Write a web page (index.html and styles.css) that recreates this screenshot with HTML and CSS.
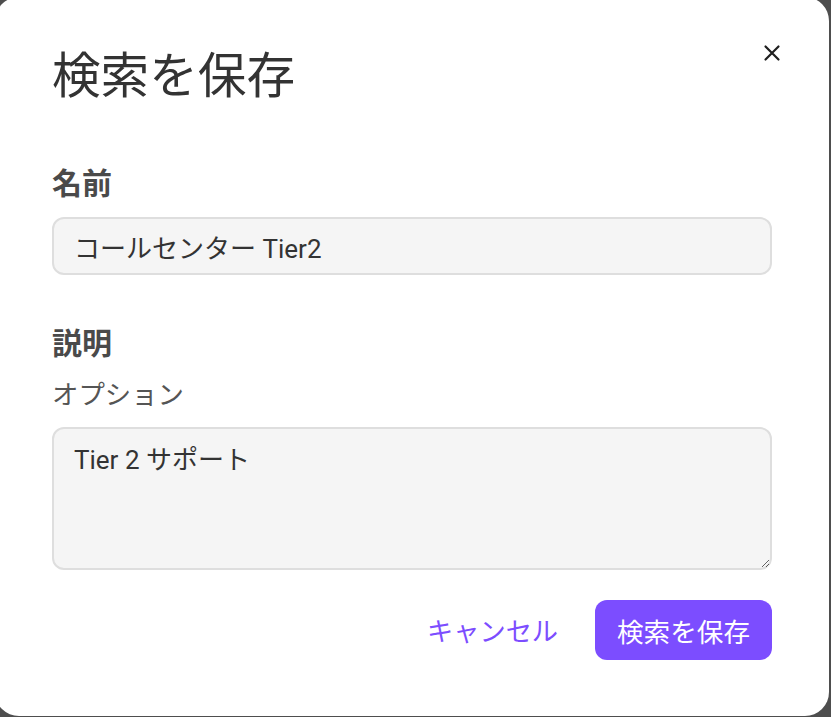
FILE: index.html
```html
<!DOCTYPE html>
<html lang="ja">
<head>
<meta charset="utf-8">
<title>検索を保存</title>
<link rel="stylesheet" href="styles.css">
</head>
<body>
<div class="dialog" role="dialog" aria-labelledby="dlg-title">
  <button class="close" aria-label="閉じる">
    <svg width="18" height="18" viewBox="0 0 18 18"><path d="M2.5 2.5 L15.5 15.5 M15.5 2.5 L2.5 15.5" stroke="#1f1f1f" stroke-width="2.2" stroke-linecap="round"/></svg>
  </button>
  <h1 id="dlg-title" class="title">検索を保存</h1>
  <div class="field field-name">
    <label class="label" for="name">名前</label>
    <input id="name" class="input" type="text" value="コールセンター Tier2">
  </div>
  <div class="field field-desc">
    <label class="label" for="desc">説明</label>
    <div class="hint">オプション</div>
    <textarea id="desc" class="textarea">Tier 2 サポート</textarea>
  </div>
  <div class="actions">
    <button class="btn-cancel">キャンセル</button>
    <button class="btn-save">検索を保存</button>
  </div>
</div>
</body>
</html>
```

FILE: styles.css
```css
html, body {
  margin: 0;
  padding: 0;
  height: 100%;
  overflow: hidden;
}
body {
  background: #4e4e4e;
  font-family: Roboto, "Noto Sans CJK JP", sans-serif;
}
.dialog {
  position: relative;
  box-sizing: border-box;
  width: 834px;
  height: 719px;
  margin: -3px 0 0 -5px;
  padding: 51px 57px 0 57px;
  background: #ffffff;
  border-radius: 24px;
  display: flex;
  flex-direction: column;
}
.close {
  position: absolute;
  top: 46px;
  right: 47px;
  width: 20px;
  height: 20px;
  padding: 0;
  margin: 0;
  border: none;
  background: none;
  display: flex;
  align-items: center;
  justify-content: center;
}
.title {
  margin: 0;
  font-size: 48.6px;
  line-height: 58px;
  font-weight: 400;
  color: #333333;
}
.field {
  display: flex;
  flex-direction: column;
}
.field-name {
  margin-top: 60px;
}
.field-desc {
  margin-top: 51px;
}
.label {
  font-size: 30px;
  line-height: 35px;
  font-weight: 700;
  color: #4a4a4a;
}
.hint {
  margin-top: 18px;
  font-size: 26.4px;
  line-height: 32px;
  color: #555555;
}
.input, .textarea {
  box-sizing: border-box;
  width: 100%;
  margin: 0;
  border: 2px solid #dedede;
  border-radius: 12px;
  background: #f5f5f5;
  font-family: Roboto, "Noto Sans CJK JP", sans-serif;
  font-size: 26px;
  color: #333333;
  outline: none;
}
.input {
  margin-top: 16px;
  height: 58px;
  padding: 0 20px;
  line-height: 54px;
}
.textarea {
  margin-top: 16px;
  height: 143px;
  padding: 12px 20px 9px;
  line-height: 38px;
  resize: vertical;
}
.actions {
  margin-top: 30px;
  display: flex;
  justify-content: flex-end;
  align-items: center;
  gap: 17px;
}
.btn-cancel {
  border: none;
  background: none;
  padding: 0 20px;
  height: 60px;
  font-family: Roboto, "Noto Sans CJK JP", sans-serif;
  font-size: 26.2px;
  color: #7c4dff;
}
.btn-save {
  border: none;
  background: #7c4dff;
  color: #ffffff;
  border-radius: 12px;
  height: 60px;
  padding: 0 22px;
  font-family: Roboto, "Noto Sans CJK JP", sans-serif;
  font-size: 26.6px;
}
```
